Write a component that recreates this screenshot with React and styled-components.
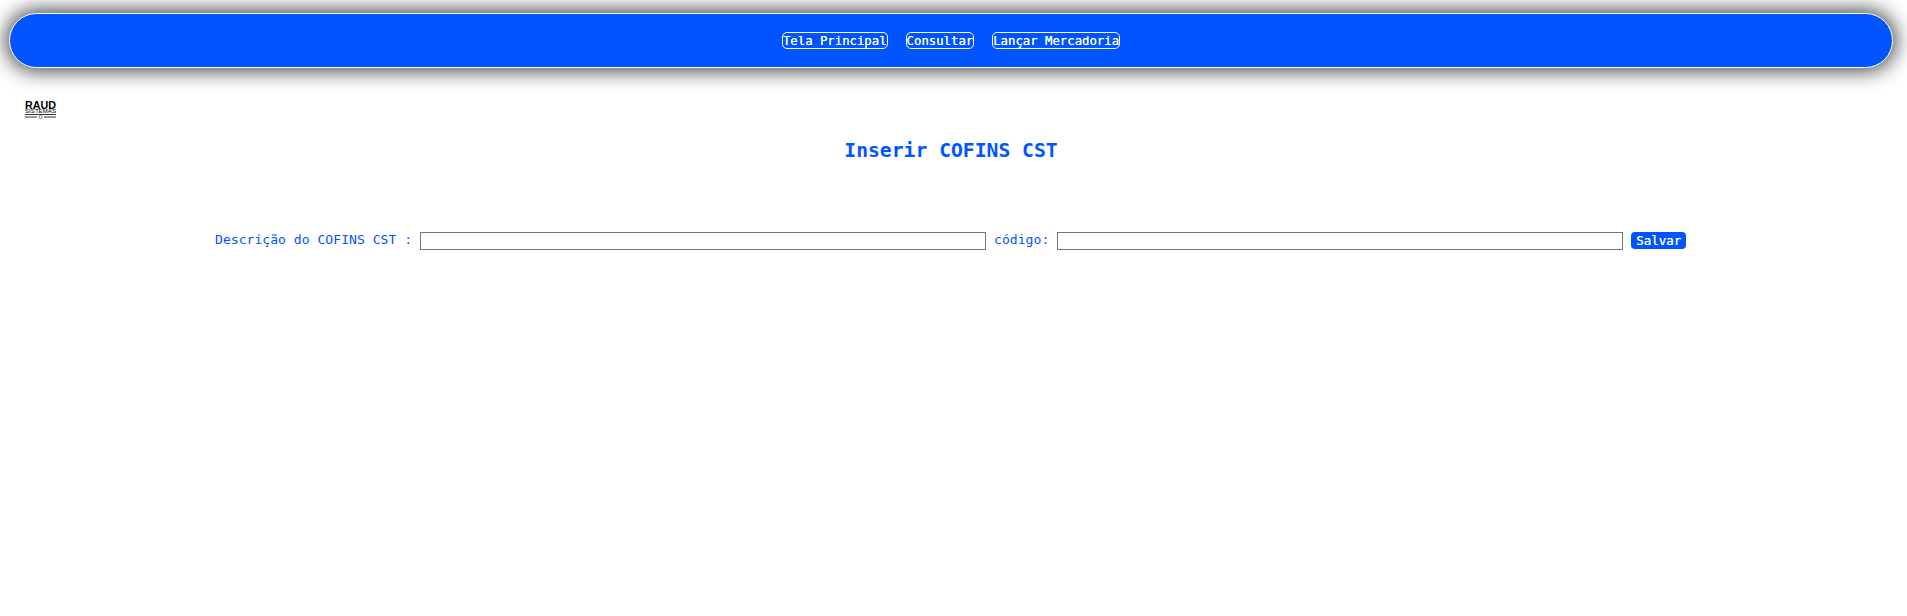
import React from "react";
import styled, { createGlobalStyle } from "styled-components";

const Global = createGlobalStyle`
  html, body { margin: 0; padding: 0; background: #fff; }
  body { font-family: "DejaVu Sans Mono", "Liberation Mono", monospace; }
`;
const Page = styled.div`
  padding: 13px 14px 0 9px;
  min-height: 603px;
`;
const NavBar = styled.nav`
  box-sizing: border-box;
  height: 55px;
  background: #0055ff;
  border: 1px solid #fff;
  border-radius: 28px;
  box-shadow: 0 0 20px 3px #444;
  display: flex;
  align-items: center;
  justify-content: center;
  gap: 18px;
`;
const NavLink = styled.a`
  box-sizing: border-box;
  height: 17px;
  line-height: 16px;
  border: 1px solid #fff;
  border-radius: 5px;
  color: #fff;
  font-size: 12.3px;
  text-shadow: 0 0 0.3px #fff;
  display: block;
  white-space: nowrap;
`;
const Logo = styled.svg`
  display: block;
  width: 32px;
  height: 21px;
  margin: 31px 0 0 16px;
  overflow: visible;
`;
const Heading = styled.h1`
  margin: 19px 0 0;
  text-align: center;
  color: #0055ff;
  font-size: 19.7px;
  line-height: 24px;
  font-weight: 700;
`;
const Form = styled.form`
  margin-top: 69px;
  display: flex;
  align-items: flex-start;
  padding-left: 206px;
`;
const Label = styled.label`
  color: #0055ff;
  font-size: 13.1px;
  line-height: 16px;
  white-space: nowrap;
  margin-right: ${p => p.$gap}px;
`;
const TextInput = styled.input`
  box-sizing: border-box;
  width: 566px;
  height: 18px;
  border: 1px solid #767676;
  background: #fff;
  padding: 0 2px;
  margin-right: ${p => p.$gap}px;
  outline: none;
`;
const SaveButton = styled.button`
  box-sizing: border-box;
  width: 55px;
  height: 17px;
  border: none;
  border-radius: 4px;
  background: #0055ff;
  color: #fff;
  font-family: inherit;
  font-size: 12.5px;
  line-height: 17px;
  text-shadow: 0 0 0.3px #fff;
  padding: 0;
`;

export default function App() {
  return (
    <Page>
      <Global />
      <NavBar>
        <NavLink>Tela Principal</NavLink>
        <NavLink>Consultar</NavLink>
        <NavLink>Lançar Mercadoria</NavLink>
      </NavBar>
      <Logo viewBox="0 0 32 21">
        <text x="0" y="9.5" fontFamily="Liberation Sans" fontWeight="700" fontSize="11.5" textLength="31" lengthAdjust="spacingAndGlyphs">RAUD</text>
        <text x="0" y="14" fontFamily="Liberation Sans" fontSize="5" textLength="31" lengthAdjust="spacingAndGlyphs">SISTEMAS</text>
        <path d="M0 15.5h31" stroke="#334" strokeWidth="1" />
        <path d="M0 18h12M19 18h12" stroke="#334" strokeWidth="1" />
        <circle cx="15.5" cy="18" r="1.5" fill="none" stroke="#555" strokeWidth=".7" />
      </Logo>
      <Heading>Inserir COFINS CST</Heading>
      <Form>
        <Label $gap={8}>Descrição do COFINS CST :</Label>
        <TextInput $gap={8} />
        <Label $gap={8}>código:</Label>
        <TextInput $gap={8} />
        <SaveButton type="button">Salvar</SaveButton>
      </Form>
    </Page>
  );
}
